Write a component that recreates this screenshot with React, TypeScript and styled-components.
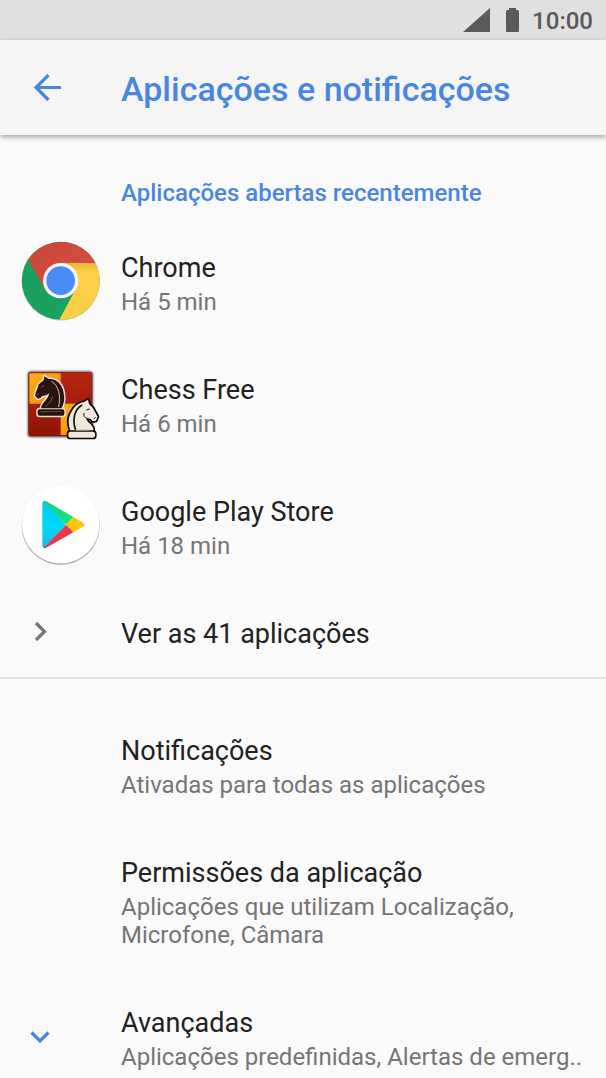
import React from "react";
import styled, { createGlobalStyle } from "styled-components";

const GlobalStyle = createGlobalStyle`
  *, *::before, *::after { box-sizing: border-box; }
  body {
    margin: 0;
    background: #fafafa;
    font-family: Roboto, "Liberation Sans", sans-serif;
  }
`;

const Page = styled.div`
  min-height: 100vh;
  background: #fafafa;
  color: #212121;
`;

const StatusBar = styled.div`
  display: flex;
  align-items: center;
  justify-content: flex-end;
  height: 40px;
  padding: 0 13px;
  background: #e0e0e0;
  color: #5a5a5a;
`;

const SignalIcon = styled.svg`
  width: 27px;
  height: 24px;
  margin-right: 16px;
`;

const BatteryIcon = styled.svg`
  width: 13px;
  height: 24px;
  margin-right: 13px;
`;

const Clock = styled.time`
  padding-top: 2px;
  font-size: 24px;
  font-weight: 500;
  line-height: 28px;
`;

const AppBar = styled.header`
  display: flex;
  align-items: center;
  height: 95px;
  background: #f5f5f5;
  box-shadow: 0 2px 5px rgba(0, 0, 0, 0.36);
`;

const BackButton = styled.button`
  display: flex;
  flex: none;
  width: 121px;
  height: 48px;
  padding: 10px 34px;
  border: 0;
  background: none;
  color: #4a86e0;
  cursor: pointer;
`;

const ScreenTitle = styled.h1`
  margin: 0;
  padding-top: 3px;
  color: #4a86e0;
  font-size: 34px;
  font-weight: 500;
  line-height: 40px;
  white-space: nowrap;
`;

const Section = styled.section<{ $divided?: boolean }>`
  padding-top: ${({ $divided }) => ($divided ? "24px" : "44px")};
  border-top: ${({ $divided }) => ($divided ? "2px solid #e0e0e0" : "0")};
`;

const SectionTitle = styled.h2`
  margin: 0 0 13px;
  padding-left: 121px;
  color: #4a86e0;
  font-size: 24px;
  font-weight: 500;
  line-height: 28px;
`;

const Row = styled.button<{ $kind?: "link" | "last" }>`
  display: flex;
  align-items: flex-start;
  width: 100%;
  padding: ${({ $kind }) =>
    $kind === "link" ? "30px 24px 25px 0" : $kind === "last" ? "30px 24px 0 0" : "30px 24px 26px 0"};
  border: 0;
  background: none;
  color: inherit;
  font: inherit;
  text-align: left;
  cursor: pointer;
`;

const IconSlot = styled.span`
  display: flex;
  flex: none;
  align-self: center;
  align-items: center;
  width: 121px;
  height: 36px;
  padding-left: 22px;
`;

const AppIcon = styled.svg`
  flex: none;
  width: 78px;
  height: 78px;
  margin-top: -4px;
  overflow: visible;
`;

const Chevron = styled.svg<{ $accent?: boolean }>`
  flex: none;
  width: 36px;
  height: 36px;
  margin-top: -4px;
  color: ${({ $accent }) => ($accent ? "#4a86e0" : "#757575")};
`;

const RowText = styled.span`
  display: flex;
  flex: 1;
  flex-direction: column;
  gap: 2px;
  min-width: 0;
`;

const RowTitle = styled.span`
  font-size: 27px;
  line-height: 36px;
`;

const RowSummary = styled.span<{ $single?: boolean }>`
  color: #757575;
  font-size: 24px;
  line-height: 28px;
  white-space: ${({ $single }) => ($single ? "nowrap" : "normal")};
`;

const ChromeLogo = () => (
  <AppIcon viewBox="36 36 234 234" aria-hidden="true">
    <defs>
      <linearGradient id="redShade" x1="0" y1="0" x2="1" y2="1">
        <stop offset="0" stopColor="#c9473a" />
        <stop offset="1" stopColor="#da4e43" />
      </linearGradient>
      <linearGradient id="yellowShade" x1="0" y1="0" x2="0" y2="1">
        <stop offset="0" stopColor="#e9b23a" />
        <stop offset="0.14" stopColor="#fdce47" />
      </linearGradient>
      <linearGradient id="greenShade" x1="1" y1="0.4" x2="0.3" y2="0.3">
        <stop offset="0" stopColor="#0f8050" />
        <stop offset="0.4" stopColor="#1aa15f" />
      </linearGradient>
    </defs>
    <circle cx="152" cy="155" r="117" fill="#000" opacity="0.16" />
    <circle cx="152" cy="152" r="117" fill="url(#greenShade)" />
    <path d="M152 98H256A117 117 0 0 1 148 269L196 180Z" fill="url(#yellowShade)" />
    <path d="M55 89A117 117 0 0 1 256 98H152L104 178Z" fill="url(#redShade)" />
    <circle cx="152" cy="152" r="53" fill="#f4f4f4" />
    <circle cx="152" cy="152" r="43" fill="#4c8bf5" />
  </AppIcon>
);

const ChessLogo = () => (
  <AppIcon viewBox="21 12 234 234" aria-hidden="true">
    <defs>
      <linearGradient id="board" x1="0" y1="0" x2="0" y2="1">
        <stop offset="0" stopColor="#b72810" />
        <stop offset="1" stopColor="#8e1206" />
      </linearGradient>
      <linearGradient id="gold" x1="0" y1="0" x2="1" y2="1">
        <stop offset="0" stopColor="#f6b018" />
        <stop offset="1" stopColor="#f48a0c" />
      </linearGradient>
      <filter id="boardShadow" x="-15%" y="-15%" width="130%" height="130%">
        <feGaussianBlur stdDeviation="3" />
      </filter>
    </defs>
    <rect x="38" y="34" width="196" height="198" rx="9" fill="#000" opacity="0.6" filter="url(#boardShadow)" />
    <rect x="41" y="37" width="190" height="191" rx="6" fill="url(#board)" />
    <path d="M47 40H137V131H43V44Q43 40 47 40Z" fill="url(#gold)" />
    <rect x="137" y="131" width="92" height="94" fill="url(#gold)" />
    <rect x="41" y="37" width="190" height="191" rx="6" fill="none" stroke="#6e2014" strokeWidth="2" />
    <g stroke="#f3ddd2" strokeWidth="9" strokeLinejoin="round" fill="#f3ddd2">
      <path d="M78 145C80 128 99 120 103 100C91 110 80 105 78 113L69 116L60 107C62 94 69 86 71 73L86 61L88 49L101 57C128 55 145 77 147 107C149 124 144 136 139 145Z" />
      <rect x="68" y="148" width="80" height="19" rx="6" />
    </g>
    <g fill="#27140f">
      <path d="M78 145C80 128 99 120 103 100C91 110 80 105 78 113L69 116L60 107C62 94 69 86 71 73L86 61L88 49L101 57C128 55 145 77 147 107C149 124 144 136 139 145Z" />
      <rect x="68" y="148" width="80" height="19" rx="6" />
    </g>
    <path d="M110 64C130 76 139 107 131 140" fill="none" stroke="#d8c0b2" strokeWidth="3" strokeLinecap="round" />
    <path d="M78 83L86 76M64 106L70 101M112 110C113 123 98 131 92 139" fill="none" stroke="#a58778" strokeWidth="2" strokeLinecap="round" />
    <path d="M75 155H140" stroke="#67473a" strokeWidth="3" />
    <g stroke="#080706" strokeWidth="10" strokeLinejoin="round">
      <path d="M166 211C158 190 160 168 171 153C178 139 191 129 206 127L219 119L222 132L233 143L248 170L243 182L234 184L226 176L214 174C212 188 239 194 235 211Z" />
      <rect x="160" y="215" width="80" height="18" rx="6" />
    </g>
    <g fill="#eee9da">
      <path d="M166 211C158 190 160 168 171 153C178 139 191 129 206 127L219 119L222 132L233 143L248 170L243 182L234 184L226 176L214 174C212 188 239 194 235 211Z" />
      <rect x="160" y="215" width="80" height="18" rx="6" />
    </g>
    <path d="M200 136C180 148 171 176 181 208" fill="none" stroke="#171511" strokeWidth="5" strokeLinecap="round" />
    <path d="M215 150L223 147M207 160C205 168 208 173 214 174M237 176L241 173" fill="none" stroke="#171511" strokeWidth="3" strokeLinecap="round" />
    <path d="M182 210H222" stroke="#c4bba4" strokeWidth="3" />
  </AppIcon>
);

const PlayLogo = () => (
  <AppIcon viewBox="36 33 234 234" aria-hidden="true">
    <defs>
      <linearGradient id="cyan" x1="0" y1="0" x2="0" y2="1">
        <stop offset="0" stopColor="#00c9f5" />
        <stop offset="0.55" stopColor="#00d9ff" />
        <stop offset="1" stopColor="#20b5e8" />
      </linearGradient>
      <linearGradient id="green" x1="0" y1="0" x2="1" y2="0">
        <stop offset="0" stopColor="#14c982" />
        <stop offset="1" stopColor="#12e681" />
      </linearGradient>
      <filter id="discShadow" x="-10%" y="-10%" width="120%" height="120%">
        <feGaussianBlur stdDeviation="2" />
      </filter>
    </defs>
    <circle cx="152" cy="153" r="117" fill="#000" opacity="0.28" filter="url(#discShadow)" />
    <circle cx="152" cy="149" r="116" fill="#fff" />
    <path d="M97 83Q98 77 105 78L167 149L105 219Q98 220 97 214Z" fill="url(#cyan)" />
    <path d="M101 78Q105 77 109 79L190 126L168 149Z" fill="url(#green)" />
    <path d="M190 126L221 144Q227 149 221 154L190 172L168 149Z" fill="#fcc60c" />
    <path d="M101 219L168 149L190 172L111 217Q105 221 101 219Z" fill="#e9374b" />
  </AppIcon>
);

const ArrowBack = () => (
  <svg width="28" height="28" viewBox="0 0 28 28" fill="none" aria-hidden="true">
    <path d="M27 13.5H2M14.5 1L2 13.5L14.5 26" stroke="currentColor" strokeWidth="3.2" />
  </svg>
);

const recentApps = [
  { name: "Chrome", used: "Há 5 min", Logo: ChromeLogo },
  { name: "Chess Free", used: "Há 6 min", Logo: ChessLogo },
  { name: "Google Play Store", used: "Há 18 min", Logo: PlayLogo },
];

export default function App() {
  return (
    <Page>
      <GlobalStyle />
      <StatusBar>
        <SignalIcon viewBox="0 0 27 24" aria-hidden="true">
          <path d="M27 0V24H0Z" fill="currentColor" />
        </SignalIcon>
        <BatteryIcon viewBox="0 0 13 24" aria-hidden="true">
          <path d="M3 0H10V2H12Q13 2 13 4V23Q13 24 12 24H1Q0 24 0 23V4Q0 2 1 2H3Z" fill="currentColor" />
        </BatteryIcon>
        <Clock>10:00</Clock>
      </StatusBar>
      <AppBar>
        <BackButton type="button" aria-label="Voltar">
          <ArrowBack />
        </BackButton>
        <ScreenTitle>Aplicações e notificações</ScreenTitle>
      </AppBar>
      <main>
        <Section>
          <SectionTitle>Aplicações abertas recentemente</SectionTitle>
          {recentApps.map(({ name, used, Logo }) => (
            <Row key={name} type="button">
              <IconSlot>
                <Logo />
              </IconSlot>
              <RowText>
                <RowTitle>{name}</RowTitle>
                <RowSummary>{used}</RowSummary>
              </RowText>
            </Row>
          ))}
          <Row type="button" $kind="link">
            <IconSlot>
              <Chevron viewBox="0 0 36 36" aria-hidden="true">
                <path d="M14 9L22.5 17.5L14 26" fill="none" stroke="currentColor" strokeWidth="3.2" />
              </Chevron>
            </IconSlot>
            <RowText>
              <RowTitle>Ver as 41 aplicações</RowTitle>
            </RowText>
          </Row>
        </Section>
        <Section $divided>
          <Row type="button">
            <IconSlot />
            <RowText>
              <RowTitle>Notificações</RowTitle>
              <RowSummary>Ativadas para todas as aplicações</RowSummary>
            </RowText>
          </Row>
          <Row type="button">
            <IconSlot />
            <RowText>
              <RowTitle>Permissões da aplicação</RowTitle>
              <RowSummary>Aplicações que utilizam Localização, Microfone, Câmara</RowSummary>
            </RowText>
          </Row>
          <Row type="button" $kind="last">
            <IconSlot>
              <Chevron $accent viewBox="0 0 36 36" aria-hidden="true">
                <path d="M9.5 14.5L18 23L26.5 14.5" fill="none" stroke="currentColor" strokeWidth="3.2" />
              </Chevron>
            </IconSlot>
            <RowText>
              <RowTitle>Avançadas</RowTitle>
              <RowSummary $single>Aplicações predefinidas, Alertas de emerg..</RowSummary>
            </RowText>
          </Row>
        </Section>
      </main>
    </Page>
  );
}
